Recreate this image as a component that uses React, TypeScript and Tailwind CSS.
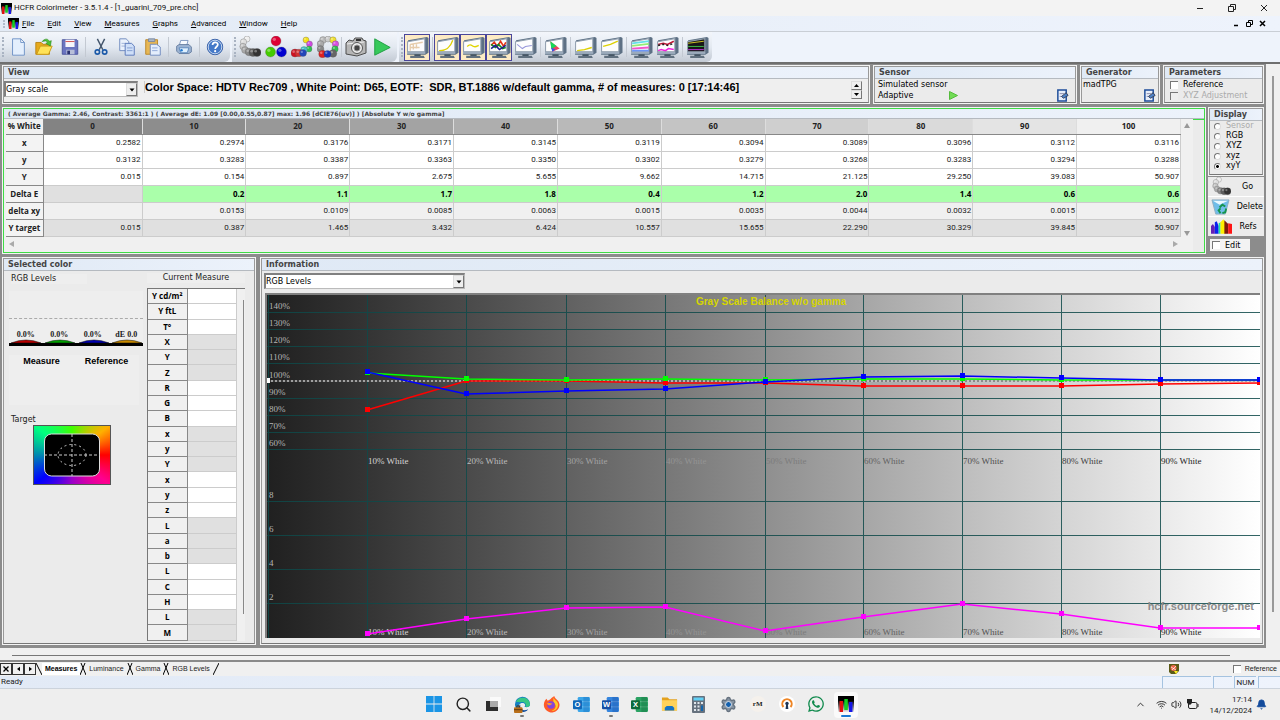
import { useState } from "react";
import type { ReactNode } from "react";
import { Bell, ChevronUp, Search, Settings, Volume2, Wifi } from "lucide-react";
import { FaWhatsapp } from "react-icons/fa";

const columns = [
  { name: "0", bg: "bg-[#838383]" },
  { name: "10", bg: "bg-[#8d8d8d]" },
  { name: "20", bg: "bg-[#989898]" },
  { name: "30", bg: "bg-[#a3a3a3]" },
  { name: "40", bg: "bg-[#aeaeae]" },
  { name: "50", bg: "bg-[#b9b9b9]" },
  { name: "60", bg: "bg-[#c4c4c4]" },
  { name: "70", bg: "bg-[#cfcfcf]" },
  { name: "80", bg: "bg-[#dadada]" },
  { name: "90", bg: "bg-[#e4e4e4]" },
  { name: "100", bg: "bg-[#f0f0f0]" },
];

const rows = [
  { name: "x", bg: "bg-white", values: ["0.2582", "0.2974", "0.3176", "0.3171", "0.3145", "0.3119", "0.3094", "0.3089", "0.3096", "0.3112", "0.3116"] },
  { name: "y", bg: "bg-white", values: ["0.3132", "0.3283", "0.3387", "0.3363", "0.3350", "0.3302", "0.3279", "0.3268", "0.3283", "0.3294", "0.3288"] },
  { name: "Y", bg: "bg-white", values: ["0.015", "0.154", "0.897", "2.675", "5.655", "9.662", "14.715", "21.125", "29.250", "39.083", "50.907"] },
  { name: "Delta E", bg: "bg-[#aaffaa] font-bold text-black", values: ["", "0.2", "1.1", "1.7", "1.8", "0.4", "1.2", "2.0", "1.4", "0.6", "0.6"] },
  { name: "delta xy", bg: "bg-[#f0f0f0]", values: ["", "0.0153", "0.0109", "0.0085", "0.0063", "0.0015", "0.0035", "0.0044", "0.0032", "0.0015", "0.0012"] },
  { name: "Y target", bg: "bg-[#e0e0e0]", values: ["0.015", "0.387", "1.465", "3.432", "6.424", "10.557", "15.655", "22.290", "30.329", "39.845", "50.907"] },
];

const measureRows = ["Y cd/m²", "Y ftL", "T°", "X", "Y", "Z", "R", "G", "B", "x", "y", "Y", "x", "y", "z", "L", "a", "b", "L", "C", "H", "L", "M"];

const menus = ["File", "Edit", "View", "Measures", "Graphs", "Advanced", "Window", "Help"];

const Panel = ({ title, className = "", green = false, children }: { title: string; className?: string; green?: boolean; children: ReactNode }) => (
  <section className={`flex min-w-0 flex-col bg-[#f4f4f4] p-px ${className}`}>
    <div className={`flex min-h-0 flex-1 flex-col border ${green ? "border-[#3fdc46]" : "border-[#999] border-b-[#777]"} bg-[#ebebeb]`}>
      <h2 className={`shrink-0 overflow-hidden border-b border-[#b5bac0] bg-linear-to-r from-[#dfe9f5] to-[#ecf2fb] px-1 font-['DejaVu_Sans',sans-serif] font-bold whitespace-nowrap text-[#444] ${green ? "h-[10px] text-[6px] leading-[9px]" : "h-3 text-[8px] leading-[11px]"}`}>
        {title}
      </h2>
      {children}
    </div>
  </section>
);

const Combo = ({ label, value, className }: { label: string; value: string; className: string }) => (
  <div className={`relative h-4 border-t-2 border-l-2 border-t-[#808080] border-l-[#808080] border-r border-b border-r-[#bbb] border-b-[#bbb] bg-white ${className}`}>
    <select aria-label={label} className="block h-[13px] w-full appearance-none bg-white text-[8px] leading-[13px] text-black outline-none" defaultValue={value}>
      <option>{value}</option>
    </select>
    <span className="pointer-events-none absolute top-0 right-0 flex h-[13px] w-[11px] items-center justify-center border border-[#ddd] border-r-[#777] border-b-[#777] bg-[#eee]">
      <svg width="6" height="4" viewBox="0 0 6 4"><path d="M0.5 0.5h5L3 3.5z" fill="#000" /></svg>
    </span>
  </div>
);

const Tick = ({ label, disabled = false }: { label: string; disabled?: boolean }) => (
  <label className={`flex items-center gap-[5px] text-[8px] leading-[11px] whitespace-nowrap ${disabled ? "text-[#aaa]" : "text-black"}`}>
    <input type="checkbox" disabled={disabled} className={`h-2 w-2 shrink-0 appearance-none border-t border-l border-[#777] checked:bg-black ${disabled ? "bg-[#eee]" : "bg-white"}`} />
    {label}
  </label>
);

/* ---------- icons ---------- */

const Logo = ({ size = 11 }: { size?: number }) => (
  <svg width={size} height={size} viewBox="0 0 16 16">
    <defs>
      <linearGradient id="logoBg" x1="0" y1="0" x2="0" y2="1">
        <stop offset="0.3" stopColor="#000" /><stop offset="1" stopColor="#eee" />
      </linearGradient>
    </defs>
    <path d="M0 0h16v16h-16z" fill="url(#logoBg)" />
    <path d="M1.500 5h3.500v11h-3.500z" fill="#e01010" />
    <path d="M6.300 3h3.500v11h-3.500z" fill="#12d020" />
    <path d="M11 6h3.500v10h-3.500z" fill="#1717e6" />
  </svg>
);

const Svg = ({ children, size = 20 }: { children: ReactNode; size?: number }) => (
  <svg width={size} height={size} viewBox="0 0 22 22" fill="none">{children}</svg>
);

const NewIcon = () => (
  <Svg>
    <path d="M5 2h9l4 4v14H5z" fill="#e4effd" stroke="#6b8fc4" />
    <path d="M14 2v4h4z" fill="#fff" stroke="#6b8fc4" />
  </Svg>
);
const OpenIcon = () => (
  <Svg>
    <path d="M2 6h6l2 2h7v11H2z" fill="#e6a91c" stroke="#b88210" />
    <path d="M3 19l4-9h13l-4 9z" fill="#ffe258" stroke="#c99a18" />
    <path d="M9 5c3-4 7-3 8 0l2-1-1 6-5-3 2-1c-1-2-3-2-6-1z" fill="#4fc236" stroke="#2b8a1b" strokeWidth="0.700" />
  </Svg>
);
const SaveIcon = () => (
  <Svg>
    <path d="M2.500 3h16l1 1v15h-17z" fill="#6a74c0" stroke="#4a539b" />
    <path d="M6 3h10v8H6z" fill="#f6f6fb" />
    <path d="M6 5h10" stroke="#cc4444" />
    <path d="M7 14h9v5H7z" fill="#b8bfd8" />
    <path d="M8 15h3v4H8z" fill="#2a3270" />
  </Svg>
);
const CutIcon = () => (
  <Svg>
    <path d="M7 2l6 12M15 2L9 14" stroke="#44566c" strokeWidth="1.600" />
    <circle cx="7" cy="16.500" r="2.400" stroke="#1b59a8" strokeWidth="1.800" />
    <circle cx="15" cy="16.500" r="2.400" stroke="#1b59a8" strokeWidth="1.800" />
  </Svg>
);
const CopyIcon = () => (
  <Svg>
    <path d="M3 2h7l3 3v10H3z" fill="#eaf1fc" stroke="#6b87bd" />
    <path d="M5 7h5M5 10h5" stroke="#9cb0d6" />
    <path d="M9 7h7l3 3v10H9z" fill="#cfdff8" stroke="#5575b8" />
    <path d="M11 12h6M11 15h6" stroke="#7f9bd0" />
  </Svg>
);
const PasteIcon = () => (
  <Svg>
    <path d="M3 3h13v16H3z" fill="#e7b754" stroke="#b98524" />
    <path d="M6 2h7v3H6z" fill="#aab6c6" stroke="#7886a0" />
    <path d="M8 8h7l4 3v9H8z" fill="#e4eefc" stroke="#6b87bd" />
    <path d="M10 12h6M10 15h6" stroke="#8aa5d6" />
  </Svg>
);
const PrintIcon = () => (
  <Svg size={18}>
    <path d="M7 3h9l-2 7H5z" fill="#f8fbff" stroke="#6e8ab8" />
    <path d="M2 10l3-2h12l3 3v6l-3 2H5l-3-3z" fill="#9cb3d2" stroke="#5c7499" />
    <path d="M5 12h12l-2 6H7z" fill="#dff0ff" stroke="#4f7eb4" />
    <circle cx="8" cy="15" r="1.500" fill="#237ad0" />
  </Svg>
);
const HelpIcon = () => (
  <Svg>
    <circle cx="11" cy="11" r="8.500" fill="#4479c8" stroke="#2b55a0" />
    <circle cx="11" cy="11" r="7.500" stroke="#d5e1f3" />
    <path d="M8.300 8.700c0-3.800 5.800-3.800 5.800-.4 0 2.300-2.900 2.500-2.900 4.800" stroke="#fff" strokeWidth="1.900" />
    <circle cx="11.200" cy="15.600" r="1.200" fill="#fff" />
  </Svg>
);

const Balls = ({ items, size = 22 }: { items: [number, number, number, string][]; size?: number }) => (
  <svg width={size} height={size} viewBox="0 0 22 22">
    {items.map(([x, y, r, color], i) => (
      <g key={i}>
        <circle cx={x} cy={y} r={r} fill={color} stroke="#555" strokeWidth="0.300" />
        <circle cx={x - r / 3} cy={y - r / 3} r={r / 3} fill="#fff" opacity="0.350" />
      </g>
    ))}
  </svg>
);
const grayBalls: [number, number, number, string][] = [[8, 3, 3, "#eee"], [4.5, 6, 3.2, "#ddd"], [4, 10.5, 3.2, "#c4c4c4"], [6, 14, 3.4, "#aaa"], [10, 16, 3.8, "#888"], [14, 16.5, 4, "#5c5c5c"], [18, 16.5, 4, "#333"]];
const primaryBalls: [number, number, number, string][] = [[11, 5, 5, "#dd0033"], [5.5, 16, 5, "#44cc00"], [16.5, 16, 5, "#0000d0"]];
const satBalls: [number, number, number, string][] = [[15, 4, 3, "#f5e11a"], [18.5, 8, 3, "#d04ae0"], [18, 13, 3, "#30c050"], [13, 14, 3.4, "#45c8c8"], [4, 17, 4, "#d01020"], [8, 17, 3.8, "#d43030"], [12, 17, 3.5, "#2244bb"]];
const ringBalls: [number, number, number, string][] = [[6, 4, 3.4, "#bbb"], [11, 3, 3, "#ccc"], [16, 4, 3.2, "#f0e030"], [18.5, 8, 3.2, "#d850e0"], [18, 13, 3.2, "#30c050"], [3.5, 8, 3.4, "#aaa"], [3.5, 13, 3.4, "#888"], [16, 17.5, 3.8, "#666"], [5.5, 18, 3.8, "#dd2020"], [10.5, 18, 3.6, "#1833bb"]];

const CameraIcon = () => (
  <svg width="22" height="22" viewBox="0 0 22 22">
    <path d="M1 7l3-3 4 1 2-3h7l1 2 3 1v12l-9 3-11-2z" fill="#b6b6b6" stroke="#4c4c4c" />
    <path d="M2 8l17-2" stroke="#eee" />
    <circle cx="12" cy="12" r="5.500" fill="#eee" stroke="#555" />
    <circle cx="12" cy="12" r="3" fill="#444" stroke="#999" />
    <path d="M11 3h5v2h-5z" fill="#333" />
  </svg>
);
const PlayIcon = () => (
  <Svg><path d="M3 2l17 9.500L3 20z" fill="#37c95b" stroke="#1d9c40" /></Svg>
);

const Monitor = ({ dark = false, children }: { dark?: boolean; children?: ReactNode }) => (
  <svg width="23" height="23" viewBox="0 0 22 22" fill="none">
    <path d="M2 4L20 1l1.500 1v14l-3 2H1z" fill="#5d7084" />
    <path d="M1.500 5.500L18 2.500v12.500H1.500z" fill={dark ? "#171717" : "#fdfdfd"} stroke="#93a1b0" />
    <path d="M1 15.500h17.500v1.500H1z" fill="#a9b8c8" />
    <path d="M8 17.500h6v2H8z" fill="#3d4d5c" />
    <path d="M4 19h13l1 2H4z" fill="#60707f" />
    {children}
  </svg>
);

const graphButtons: { label: string; on?: boolean; sep?: boolean; dark?: boolean; art: ReactNode }[] = [
  { label: "Measures grid", on: true, sep: true, art: <path d="M4 8l12-2M4 8v6M7 8v5M10 8v4M4 11h9" stroke="#e6ccab" strokeWidth="1.300" /> },
  { label: "Luminance", on: true, art: <path d="M3 14c8 0 11-4 13-10" stroke="#ddd000" strokeWidth="1.300" /> },
  { label: "Gamma", on: true, art: <path d="M5 10c3-3 4-1 6 0s3 0 5-1" stroke="#e0d400" strokeWidth="1.300" /> },
  { label: "RGB levels", on: true, art: <g strokeWidth="1.500"><path d="M3 9l3-3 3 4 3-5 3 5 2-4" stroke="#e33112" /><path d="M3 8l4 3 3-3 4 4 3-1" stroke="#168a20" /><path d="M3 12l4-3 4 4 6-4" stroke="#1c1c8e" /></g> },
  { label: "Color temperature", sep: true, art: <path d="M3 8l5 4 3-2 6-1" stroke="#9797da" /> },
  { label: "CIE diagram", sep: true, art: <g><path d="M6 5l9 7-7 3z" fill="#ef4060" /><path d="M6 5l6 4.500-5 3z" fill="#18d957" /><path d="M6.800 11l1.200 4 3-2z" fill="#3759e0" /></g> },
  { label: "Near black", art: <path d="M3 14l7-1 7-2" stroke="#ddd000" strokeWidth="1.300" /> },
  { label: "Near white", sep: true, art: <path d="M3 10l7-2 7-3" stroke="#ddd000" strokeWidth="1.300" /> },
  { label: "Saturation luminance", art: <g strokeWidth="1.700"><path d="M2 7l16-2" stroke="#65e0e8" /><path d="M2 9.500l16-2" stroke="#93ed75" /><path d="M2 12l16-1" stroke="#f355cb" /><path d="M2 14h16" stroke="#6c96f8" /></g> },
  { label: "Saturation shifts", sep: true, art: <g strokeWidth="1.400"><path d="M2 8l5-1 4 1 6-3" stroke="#c11434" /><path d="M2 9l5-1 4 1 6-2" stroke="#222" strokeDasharray="2 2" /><path d="M2 14l3-1 4 1 3-2 5 1" stroke="#ef22db" /></g> },
  { label: "Combined graph", dark: true, art: <g><path d="M2 7l15-2" stroke="#c6bd22" /><path d="M2 10h15" stroke="#39aa44" /><path d="M2 13h15" stroke="#b52ad0" /></g> },
];

const FormIcon = () => (
  <svg width="13" height="13" viewBox="0 0 14 14">
    <path d="M2 1h9v12H2z" fill="#e7eefa" stroke="#1f4e9a" strokeWidth="1.600" />
    <path d="M4 5h5M4 8h4" stroke="#88a" />
    <path d="M6 8l5-4 2 3-5 3z" fill="#4e82c8" stroke="#343d55" />
  </svg>
);

const ToolGroup = ({ children }: { children: ReactNode }) => (
  <div className="flex h-[30px] items-center rounded-br-md bg-linear-to-b from-[#f3f6fb] via-[#e3e9f1] to-[#c3cad4] px-[2px]">
    <span className="mr-px h-5 border-l-2 border-dotted border-[#a9b3c2]" />
    {children}
  </div>
);
const ToolButton = ({ label, on = false, children }: { label: string; on?: boolean; children: ReactNode }) => (
  <button aria-label={label} className={`flex h-[27px] w-[26px] items-center justify-center ${on ? "border border-[#4a469a] bg-[#fdebc4]" : ""}`}>{children}</button>
);
const Sep = ({ className = "mx-[2px]" }: { className?: string }) => <span className={`h-5 w-px bg-[#c3c9d2] ${className}`} />;

/* ---------- chart ---------- */

const lineX = [100, 199, 299, 398, 498, 596, 695, 794, 893, 992];
const series = [
  { color: "#ff0000", ys: [115, 86, 86, 88, 88, 91, 91, 91, 89, 88] },
  { color: "#00ff00", ys: [78, 84, 85, 84, 85, 84, 84, 85, 85, 85] },
  { color: "#0000ff", ys: [77, 99, 96, 94, 87, 82, 81, 83, 85, 85] },
  { color: "#ff00ff", ys: [339, 324, 313, 312, 336, 322, 309, 319, 333, 333] },
];
const percentLines = [17, 34, 51, 68, 86, 103, 120, 137, 154];
const labelColors = ["#d6d6d6", "#bdbdbd", "#a4a4a4", "#949494", "#7c7c7c", "#626262", "#4f4f4f", "#404040", "#222222"];

const Chart = () => (
  <svg className="block h-auto w-full" viewBox="0 0 993 343" role="img" aria-label="Gray Scale Balance w/o gamma">
    <defs>
      <linearGradient id="gray">
        <stop offset="0" stopColor="#202020" />
        <stop offset="0.100" stopColor="#343434" />
        <stop offset="0.200" stopColor="#4a4a4a" />
        <stop offset="0.400" stopColor="#777777" />
        <stop offset="0.600" stopColor="#a6a6a6" />
        <stop offset="0.800" stopColor="#d4d4d4" />
        <stop offset="1" stopColor="#ffffff" />
      </linearGradient>
    </defs>
    <rect width="993" height="343" fill="url(#gray)" />
    <g stroke="#0f4a4a" strokeWidth="1" opacity="0.850" shapeRendering="crispEdges">
      {[...percentLines, 206, 240, 274, 308].map((y) => y !== 86 && <path key={y} d={`M0 ${y + 0.5}H993`} />)}
      {[1, ...lineX.slice(0, 9)].map((x) => <path key={x} d={`M${x + 0.5} 0V343`} />)}
    </g>
    <path d="M0 86H993" stroke="#555" />
    <path d="M0 86H993" stroke="#fff" strokeDasharray="2 2" />
    <g fontFamily="Liberation Serif, serif" fontSize="9" fill="#b5b5b5">
      {percentLines.map((y, i) => <text key={y} x="2" y={y - 3}>{140 - i * 10}%</text>)}
      {[8, 6, 4, 2].map((n, i) => <text key={n} x="2" y={203 + i * 34}>{n}</text>)}
      {lineX.slice(0, 9).map((x, i) => (
        <g key={x} fill={labelColors[i]}>
          <text x={x + 1} y="169">{(i + 1) * 10}% White</text>
          <text x={x + 1} y="340">{(i + 1) * 10}% White</text>
        </g>
      ))}
    </g>
    <g fontFamily="Liberation Sans, sans-serif" fontWeight="bold">
      <text x="504" y="10" fontSize="10" textAnchor="middle" fill="#d6d600">Gray Scale Balance w/o gamma</text>
      <text x="987" y="315" fontSize="11" textAnchor="end" fill="#8c8c8c">hcfr.sourceforge.net</text>
    </g>
    <path d="M0 83h3v5h-3z" fill="#fff" />
    {series.map((s) => (
      <g key={s.color}>
        <polyline points={s.ys.map((y, i) => `${lineX[i]},${y}`).join(" ")} fill="none" stroke={s.color} strokeWidth="1.500" />
        {s.ys.map((y, i) => <rect key={i} x={lineX[i] - 2} y={y - 3} width="5" height="5" fill={s.color} />)}
      </g>
    ))}
  </svg>
);

const Target = () => (
  <div className="flex h-[60px] w-[78px] items-center justify-center border border-[#555] bg-[conic-gradient(#40ff00_0deg,#ffb000_52deg,#ff0000_90deg,#ff0090_128deg,#9a00c8_180deg,#0000ff_232deg,#0088b0_270deg,#00ff80_308deg,#40ff00_360deg)]">
    <svg width="56" height="44" viewBox="0 0 56 44" fill="none">
      <rect x="0.500" y="1" width="55" height="42" rx="7" fill="#000" stroke="#ddd" />
      <path d="M0 22H56M28 1V43" stroke="#ccc" strokeDasharray="3 2" />
      <ellipse cx="28" cy="22" rx="14" ry="10.500" stroke="#ccc" strokeDasharray="2 3" />
    </svg>
  </div>
);

/* ---------- taskbar ---------- */

const Letter = ({ color, back, letter }: { color: string; back: string; letter: string }) => (
  <svg width="17" height="17" viewBox="0 0 18 18">
    <rect x="5" y="1" width="13" height="16" rx="1.500" fill={back} />
    <path d="M5 6h13M5 11.500h13" stroke="#fff" strokeOpacity="0.300" />
    <path d="M11 1v16h6V1z" fill={color} opacity="0.350" />
    <rect x="0" y="4.500" width="9.500" height="9.500" rx="1" fill={color} />
    <text x="4.700" y="12" fontSize="8" fontWeight="bold" textAnchor="middle" fill="#fff" fontFamily="Liberation Sans, sans-serif">{letter}</text>
  </svg>
);

const apps: { label: string; open?: boolean; active?: boolean; icon: ReactNode }[] = [
  { label: "Start", icon: <svg width="16" height="16" viewBox="0 0 16 16" fill="#1a95e6"><path d="M0 0h7.600v7.600H0zM8.400 0H16v7.600H8.400zM0 8.400h7.600V16H0zM8.400 8.400H16V16H8.400z" /></svg> },
  { label: "Search", icon: <Search size={17} strokeWidth={2} color="#222" /> },
  { label: "Task view", icon: <svg width="16" height="16" viewBox="0 0 16 16"><path d="M5 1h11v10H5z" fill="#fafafa" /><path d="M1 5h4v6h8v4H1z" fill="#2d2d2d" /><path d="M5 5h8v6H5z" fill="#aaa" /></svg> },
  {
    label: "Edge", open: true, icon: (
      <svg width="17" height="17" viewBox="0 0 18 18">
        <path d="M1 9a8 8 0 0 1 16-.5c0 3-3 4-6 3 2-2 0-5-3-4S4 12 7 16C3 15 1 12 1 9z" fill="#147fc2" />
        <path d="M2 6a8 8 0 0 1 15 3c0 2-2 3-5 2.500 2-3-1-6-5-5z" fill="#38c784" />
        <path d="M7 9c-2 4 2 8 8 5-3 5-11 3-11-2z" fill="#0c4b9d" />
        <rect x="0" y="12" width="9" height="6" rx="1" fill="#b96f19" /><path d="M3 12v-1.500h3V12M0 14.500h9" stroke="#5b3510" fill="none" />
      </svg>
    ),
  },
  {
    label: "Firefox", icon: (
      <svg width="17" height="17" viewBox="0 0 18 18">
        <path d="M9 2l3-2c0 3 5 4 5.500 9A8.300 8.300 0 1 1 2 5l1.500-2L5 5c1-1 3-1 4-3z" fill="#ff5b28" />
        <path d="M11 1c0 3 5 4 5 8s-3 7-7 7c5-2 6-6 2-9z" fill="#ffcc29" />
        <circle cx="8.500" cy="9.500" r="4" fill="#8446dd" /><path d="M4 8c2-2 4 0 6 0-2 2-4 3-6 0z" fill="#ff9b2e" />
      </svg>
    ),
  },
  { label: "Outlook", icon: <Letter color="#1067b8" back="#3ba5e8" letter="O" /> },
  { label: "Word", open: true, icon: <Letter color="#164fa5" back="#3585dd" letter="W" /> },
  { label: "Excel", icon: <Letter color="#0d6b3a" back="#2ba263" letter="X" /> },
  { label: "File Explorer", icon: <svg width="17" height="16" viewBox="0 0 18 16"><path d="M1 1h6l2 2h8v12H1z" fill="#e4a21f" /><path d="M1 4h16v11H1z" fill="#ffd25a" /><path d="M4 15v-3l2-2h6l2 2v3z" fill="#1673c4" /></svg> },
  { label: "Calculator", icon: <svg width="13" height="17" viewBox="0 0 13 17"><rect width="13" height="17" rx="1" fill="#66717e" /><path d="M1.500 1.500h10v3h-10z" fill="#62d0f5" /><path d="M2 6h2v2H2zM5.500 6h2v2h-2zM9 6h2v2H9zM2 9.500h2v2H2zM5.500 9.500h2v2h-2zM2 13h2v2H2zM5.500 13h2v2h-2z" fill="#dfe5eb" /><path d="M9 9.500h2v5.500H9z" fill="#1265ad" /></svg> },
  { label: "Settings", icon: <svg width="17" height="17" viewBox="0 0 17 17"><Settings size={17} color="#66727f" fill="#8795a4" strokeWidth={2} /><circle cx="8.500" cy="8.500" r="3" fill="#1260ae" stroke="#dde3ea" /></svg> },
  { label: "reMarkable", icon: <span className="flex h-4 w-4 items-center justify-center rounded-full bg-[#f5f1ec] font-['Liberation_Serif',serif] text-[7px] font-bold">rM</span> },
  { label: "OpenVPN", icon: <svg width="16" height="16" viewBox="0 0 16 16"><circle cx="8" cy="8" r="8" fill="#fff" /><path d="M4.500 11a4.700 4.700 0 1 1 7 0" fill="none" stroke="#ee8525" strokeWidth="2" /><circle cx="8" cy="7.500" r="1.700" fill="#1d3556" /><path d="M7.200 8h1.600l.6 5H6.600z" fill="#1d3556" /></svg> },
  { label: "WhatsApp", icon: <FaWhatsapp size={18} color="#108a4d" /> },
  { label: "HCFR Colorimeter", active: true, icon: <Logo size={16} /> },
];

const sheetTabs = ["Measures", "Luminance", "Gamma", "RGB Levels"];

export default function App() {
  const [display, setDisplay] = useState("xyY");
  const [tab, setTab] = useState("Measures");

  return (
    <div className="flex min-h-screen w-full flex-col bg-[#f0f0f0] font-['DejaVu_Sans',sans-serif] text-[8px] text-[#222]">
      <header className="font-['Roboto',sans-serif]">
        <div className="flex h-4 items-center bg-[#f3f3f3] pl-px">
          <Logo />
          <h1 className="ml-[2px] flex-1 text-[8px] leading-4 text-[#111]">HCFR Colorimeter - 3.5.1.4 - [1_guarini_709_pre.chc]</h1>
          <div className="flex items-center gap-6 pr-3">
            <button aria-label="Minimize"><svg width="8" height="8" viewBox="0 0 8 8"><path d="M1 4.500h6" stroke="#222" /></svg></button>
            <button aria-label="Restore"><svg width="8" height="8" viewBox="0 0 8 8" fill="none" stroke="#222"><path d="M0.500 2.500h5v5h-5zM2.500 2V.5h5v5H6" /></svg></button>
            <button aria-label="Close"><svg width="8" height="8" viewBox="0 0 8 8"><path d="M1 1l6 6M7 1L1 7" stroke="#222" /></svg></button>
          </div>
        </div>
        <nav className="flex h-[15px] items-center bg-linear-to-r from-[#e3ebf6] to-[#eef3fc] pr-1 pl-[3px]">
          <span className="mr-[3px] h-2 border-l-2 border-dotted border-[#b2bccb]" />
          <Logo />
          <div className="ml-[3px] flex flex-1 gap-[13px]">
            {menus.map((m) => (
              <button key={m} className="text-[8px] leading-[14px] text-black">
                <span className="underline">{m[0]}</span>{m.slice(1)}
              </button>
            ))}
          </div>
          <div className="flex items-center gap-[6px] pr-[10px]">
            <button aria-label="Minimize document"><svg width="6" height="7" viewBox="0 0 6 7"><path d="M0 5.500h4" stroke="#000" strokeWidth="1.500" /></svg></button>
            <button aria-label="Restore document"><svg width="7" height="7" viewBox="0 0 7 7" fill="none" stroke="#000"><path d="M.5 2.500h4v4h-4zM2.500 2V.5h4v4H5" /></svg></button>
            <button aria-label="Close document"><svg width="7" height="7" viewBox="0 0 7 7"><path d="M1 1l5 5M6 1L1 6" stroke="#000" strokeWidth="1.500" /></svg></button>
          </div>
        </nav>
        <div className="flex gap-[2px] border-t border-[#c9ced5] bg-[#eef3fb]">
          <ToolGroup>
            <ToolButton label="New"><NewIcon /></ToolButton>
            <ToolButton label="Open"><OpenIcon /></ToolButton>
            <ToolButton label="Save"><SaveIcon /></ToolButton>
            <Sep />
            <ToolButton label="Cut"><CutIcon /></ToolButton>
            <ToolButton label="Copy"><CopyIcon /></ToolButton>
            <ToolButton label="Paste"><PasteIcon /></ToolButton>
            <Sep />
            <ToolButton label="Print"><PrintIcon /></ToolButton>
            <Sep />
            <ToolButton label="Help"><HelpIcon /></ToolButton>
          </ToolGroup>
          <ToolGroup>
            <ToolButton label="Measure gray scale"><Balls items={grayBalls} /></ToolButton>
            <ToolButton label="Measure primaries"><Balls items={primaryBalls} /></ToolButton>
            <ToolButton label="Measure saturations"><Balls items={satBalls} /></ToolButton>
            <ToolButton label="Measure all"><Balls items={ringBalls} /></ToolButton>
            <Sep className="mr-px" />
            <ToolButton label="Capture"><CameraIcon /></ToolButton>
            <ToolButton label="Continuous measures"><PlayIcon /></ToolButton>
          </ToolGroup>
          <ToolGroup>
            {graphButtons.map((b) => (
              <div key={b.label} className="flex items-center">
                <ToolButton label={b.label} on={b.on}><Monitor dark={b.dark}>{b.art}</Monitor></ToolButton>
                {b.sep && <Sep className="mr-px ml-[2px]" />}
              </div>
            ))}
          </ToolGroup>
        </div>
      </header>

      <div className="flex border-t-2 border-[#6f6f6f]">
        <main className="flex min-w-0 flex-1 flex-col gap-[3px] border-r-2 border-[#8c8c8c] bg-[#8c8c8c] pt-px pb-[3px] pl-[2px]">
          <div className="flex h-[39px] gap-[3px]">
            <Panel title="View" className="flex-1">
              <div className="flex flex-1 items-start bg-[#efefef] pt-[2px]">
                <Combo label="View" value="Gray scale" className="w-[134px]" />
                <p className="ml-[6px] flex-1 border-l border-[#ccc] font-['Liberation_Sans',sans-serif] text-[11px] leading-3 font-bold whitespace-pre text-black">
                  Color Space: HDTV Rec709 , White Point: D65, EOTF:  SDR, BT.1886 w/default gamma, # of measures: 0 [17:14:46]
                </p>
                <div className="mr-[6px] flex flex-col">
                  <button aria-label="Up" className="flex h-[9px] w-[11px] items-center justify-center border border-[#ddd] border-r-[#777] border-b-[#777]"><svg width="5" height="3" viewBox="0 0 5 3"><path d="M0 3L2.500 0 5 3z" /></svg></button>
                  <button aria-label="Down" className="flex h-[9px] w-[11px] items-center justify-center border border-[#ddd] border-r-[#777] border-b-[#777]"><svg width="5" height="3" viewBox="0 0 5 3"><path d="M0 0h5L2.500 3z" /></svg></button>
                </div>
              </div>
            </Panel>
            <Panel title="Sensor" className="w-[204px]">
              <div className="flex flex-1 justify-between pr-[6px] pl-[3px] text-black">
                <div className="leading-[11px]">
                  <p>Simulated sensor</p>
                  <div className="flex gap-9">
                    <span>Adaptive</span>
                    <button aria-label="Start sensor"><svg width="9" height="9" viewBox="0 0 9 9"><path d="M0.500 0.500l8 4-8 4z" fill="#72dc55" stroke="#55bb3c" /></svg></button>
                  </div>
                </div>
                <button aria-label="Configure sensor" className="self-end"><FormIcon /></button>
              </div>
            </Panel>
            <Panel title="Generator" className="w-[80px]">
              <div className="flex flex-1 justify-between pr-[2px] pl-px text-black">
                <p className="leading-[11px]">madTPG</p>
                <button aria-label="Configure generator" className="self-end"><FormIcon /></button>
              </div>
            </Panel>
            <Panel title="Parameters" className="w-[101px]">
              <div className="pl-[5px]">
                <Tick label="Reference" />
                <Tick label="XYZ Adjustment" disabled />
              </div>
            </Panel>
          </div>

          <div className="flex h-[147px] gap-[2px]">
            <Panel title="( Average Gamma: 2.46, Contrast: 3361:1 ) ( Average dE: 1.09 [0.00,0.55,0.87] max: 1.96 [dCIE76(uv)] ) [Absolute Y w/o gamma]" green className="flex-1">
              <div className="flex flex-1 bg-[#f0f0f0] pl-[2px]">
                <div className="flex min-w-0 flex-1 flex-col">
                  <table className="w-full table-fixed border-collapse font-['Open_Sans',sans-serif] text-[8px]">
                    <colgroup>
                      <col className="w-[37px]" />
                      <col className="w-[99px]" />
                      {columns.slice(1).map((c) => <col key={c.name} />)}
                    </colgroup>
                    <thead>
                      <tr className="h-[15px]">
                        <th className="border-r border-b border-[#888] p-0 leading-3 whitespace-nowrap">% White</th>
                        {columns.map((c) => (
                          <th key={c.name} className={`border-r border-b border-r-[#ddd] border-b-[#888] p-0 leading-3 ${c.bg}`}>{c.name}</th>
                        ))}
                      </tr>
                    </thead>
                    <tbody>
                      {rows.map((r) => (
                        <tr key={r.name} className="h-[17px]">
                          <th className="border-r border-b border-[#888] bg-[#f3f3f3] p-0 leading-3 whitespace-nowrap">{r.name}</th>
                          {r.values.map((v, i) => (
                            <td key={i} className={`border-r border-b border-[#ccc] p-0 pr-px text-right leading-3 ${r.name === "Delta E" ? "" : "font-['Roboto',sans-serif]"} ${r.name === "Delta E" && i === 0 ? "bg-[#e0e0e0]" : r.bg}`}>{v}</td>
                          ))}
                        </tr>
                      ))}
                    </tbody>
                  </table>
                  <div className="flex flex-1 items-center justify-between px-[3px]">
                    <svg width="5" height="6" viewBox="0 0 5 6"><path d="M5 0v6L0 3z" fill="#aaa" /></svg>
                    <svg width="5" height="6" viewBox="0 0 5 6"><path d="M0 0l5 3-5 3z" fill="#aaa" /></svg>
                  </div>
                </div>
                <div className="flex w-[12px] flex-col items-center justify-between pt-1 pb-4">
                  <svg width="6" height="5" viewBox="0 0 6 5"><path d="M0 5l3-5 3 5z" fill="#999" /></svg>
                  <svg width="6" height="5" viewBox="0 0 6 5"><path d="M0 0h6L3 5z" fill="#999" /></svg>
                </div>
                <div className="w-[11px] border-t border-[#3fdc46] bg-[#ebebeb]" />
              </div>
            </Panel>
            <div className="flex w-[56px] flex-col">
              <Panel title="Display" className="h-[69px]">
                <fieldset className="flex flex-1 flex-col justify-between pl-1">
                  {["Sensor", "RGB", "XYZ", "xyz", "xyY"].map((d) => (
                    <label key={d} className={`flex items-center gap-[5px] leading-[10px] ${d === "Sensor" ? "text-[#aaa]" : "text-black"}`}>
                      <input type="radio" name="display" disabled={d === "Sensor"} checked={display === d} onChange={() => setDisplay(d)} className="h-[7px] w-[7px] shrink-0 appearance-none rounded-full border border-[#ddd] border-t-[#777] border-l-[#777] bg-white checked:bg-[radial-gradient(#000_35%,#fff_45%)]" />
                      {d}
                    </label>
                  ))}
                </fieldset>
              </Panel>
              <div className="mt-px flex flex-col gap-px bg-white text-black">
                <button className="flex h-[19px] items-center bg-[#ebebeb] pl-1">
                  <Balls items={grayBalls} size={19} /><span className="flex-1 text-center">Go</span>
                </button>
                <button className="flex h-[19px] items-center bg-[#ebebeb] pr-px pl-[3px]">
                  <svg width="19" height="18" viewBox="0 0 20 19"><path d="M1 2h18l-4 15H5z" fill="#6fbde9" stroke="#8daec3" /><path d="M2 3h16l-9 4z" fill="#e9f7ff" /><path d="M9 10l3-3 3 2M16 11l-1 4-3 1M10 16l-2-3 2-2" stroke="#14944c" strokeWidth="2" fill="none" /></svg>
                  <span className="flex-1 text-right">Delete</span>
                </button>
                <button className="flex h-[19px] items-center bg-[#ebebeb] pl-[3px]">
                  <svg width="21" height="15" viewBox="0 0 22 15">
                    <path d="M0 15V7l2-2 2 3v7z" fill="#6420b4" /><path d="M4 15V3l2-1 2 5v8z" fill="#0b22ee" /><path d="M8 15V4l2-1v12z" fill="#1ee0a0" /><path d="M10 15V3l3-3 2 3v12z" fill="#ffee00" /><path d="M14 15V1l4 4v10z" fill="#7b1a0c" /><path d="M18 15V4l4 1v10z" fill="#ff1414" />
                  </svg>
                  <span className="flex-1 text-center">Refs</span>
                </button>
              </div>
              <div className="mt-[3px] ml-[2px] flex h-3 w-10 items-center bg-[#f3f3f3] pl-[2px]">
                <Tick label="Edit" />
              </div>
            </div>
          </div>

          <div className="flex gap-1">
            <Panel title="Selected color" className="w-[254px] shrink-0">
              <div className="flex flex-1 justify-between pr-[9px] pl-[5px]">
                <div className="flex w-[134px] flex-col">
                  <h3 className="mt-[3px] ml-[2px] w-[76px] bg-[#eee] leading-[10px]">RGB Levels</h3>
                  <div className="mt-[7px] flex h-[55px] flex-col justify-end bg-[#eee]">
                    <div className="mb-[12px] border-t border-dashed border-[#aaa]" />
                    <div className="grid grid-cols-4 text-center font-['Liberation_Serif',serif] text-[8px] leading-2 font-bold">
                      <span>0.0%</span><span>0.0%</span><span>0.0%</span><span>dE 0.0</span>
                    </div>
                    <svg className="block h-[7px] w-full" viewBox="0 0 134 7">
                      <path d="M2 4q15-6 30 0z" fill="#b80000" stroke="#000" strokeWidth="0.500" /><path d="M36 4q15-6 30 0z" fill="#00a000" stroke="#000" strokeWidth="0.500" /><path d="M70 4q15-6 30 0z" fill="#0000b0" stroke="#000" strokeWidth="0.500" /><path d="M103 4q15-6 30 0z" fill="#c88a00" stroke="#000" strokeWidth="0.500" />
                      <path d="M0 4h134v3H0z" fill="#000" />
                    </svg>
                  </div>
                  <div className="mt-[9px] grid h-[50px] w-[130px] grid-cols-2 bg-[#eee] text-center font-['Liberation_Sans',sans-serif] text-[9px] leading-3 font-bold text-black">
                    <span>Measure</span><span>Reference</span>
                  </div>
                  <h3 className="mt-[10px] ml-[2px] leading-[10px]">Target</h3>
                  <div className="ml-6"><Target /></div>
                </div>
                <div className="w-[98px]">
                  <h3 className="mt-[2px] mb-[5px] bg-[#eee] text-center leading-[10px]">Current Measure</h3>
                  <div className="flex border-t border-l border-[#777] bg-[#f0f0f0]">
                    <table className="h-[352px] w-[89px] table-fixed border-collapse font-['Open_Sans',sans-serif] text-[8px]">
                      <tbody>
                        {measureRows.map((m, i) => (
                          <tr key={i}>
                            <th className="w-[39px] border-r border-b border-[#888] bg-[#f0f0f0] p-0 leading-3 text-black">{m}</th>
                            <td className={`border-r border-b border-[#ccc] p-0 ${Math.floor(i / 3) % 2 ? "bg-[#e0e0e0]" : "bg-white"}`} />
                          </tr>
                        ))}
                      </tbody>
                    </table>
                    <div className="mt-[11px] mb-[27px] ml-[6px] w-px bg-[#888]" />
                  </div>
                </div>
              </div>
            </Panel>
            <Panel title="Information" className="flex-1">
              <div className="pt-[2px] pl-[2px]">
                <Combo label="Information" value="RGB Levels" className="w-[201px]" />
              </div>
              <div className="mt-1 mr-[2px] mb-[5px] ml-[3px] border-t-2 border-l-2 border-[#808080] bg-white">
                <Chart />
              </div>
            </Panel>
          </div>
        </main>
        <div className="flex w-[14px] justify-center pt-3 pb-9">
          <div className="w-[2px] bg-[#999]" />
        </div>
      </div>

      <div className="h-[14px] border-b-2 border-[#8a8a8a] pt-[7px] pr-[50px] pl-3">
        <div className="h-px bg-[#777]" />
      </div>
      <div className="flex h-[14px] items-center bg-[#f0f0f0] font-['Liberation_Sans',sans-serif] text-[7px]">
        <button aria-label="Close sheet" className="flex h-3 w-3 items-center justify-center border border-[#333]"><svg width="6" height="6" viewBox="0 0 6 6"><path d="M.5.500l5 5M5.500.500l-5 5" stroke="#000" strokeWidth="1.300" /></svg></button>
        <button aria-label="Previous sheet" className="flex h-3 w-3 items-center justify-center border border-[#333]"><svg width="3" height="6" viewBox="0 0 4 6"><path d="M4 0v6L0 3z" /></svg></button>
        <button aria-label="Next sheet" className="flex h-3 w-3 items-center justify-center border border-[#333]"><svg width="3" height="6" viewBox="0 0 4 6"><path d="M0 0v6l4-3z" /></svg></button>
        <svg width="6" height="12" viewBox="0 0 6 12"><path d="M0 0l6 12" stroke="#000" /></svg>
        {sheetTabs.map((t) => (
          <div key={t} className="flex items-center">
            <button onClick={() => setTab(t)} className={`h-3 px-[3px] ${tab === t ? "bg-white font-bold text-black" : ""}`}>{t}</button>
            <svg width="6" height="12" viewBox="0 0 6 12"><path d={t === "RGB Levels" ? "M6 0L0 12" : "M5 0L0 12M1 0l5 12"} stroke="#000" fill="none" /></svg>
          </div>
        ))}
        <span className="flex-1" />
        <svg className="mr-[54px]" width="10" height="10" viewBox="0 0 10 10"><path d="M0 0h10v7l-3 3H2L0 8z" fill="#5b5a16" /><circle cx="4.500" cy="4" r="3" fill="#ef6a4c" /><path d="M2 3l5 3M3 6l4-4" stroke="#fff" strokeWidth="0.700" /><path d="M5 7h4L7 10z" fill="#ffee22" /></svg>
        <label className="flex items-center gap-[4px] pr-[3px]">
          <input type="checkbox" className="h-2 w-2 appearance-none border-t border-l border-[#777] bg-white checked:bg-black" />
          Reference
        </label>
      </div>
      <div className="flex h-[13px] items-center border-b border-[#ccd3dc] bg-linear-to-r from-[#e2eaf6] to-[#eef3fc] pl-px font-['Roboto',sans-serif] text-[8px]">
        <span className="flex-1">Ready</span>
        <div className="flex h-3 gap-[2px]">
          <span className="w-[49px] border-t border-l border-[#a5c3e0]" />
          <span className="w-[19px] border-t border-l border-[#a5c3e0]" />
          <span className="w-[22px] border-t border-l border-[#a5c3e0] text-center leading-[11px]">NUM</span>
          <span className="w-[22px] border-t border-l border-[#a5c3e0]" />
        </div>
      </div>

      <footer className="grid flex-1 grid-cols-[1fr_auto_1fr] items-center bg-[#eeeeee] font-['Roboto',sans-serif]">
        <div />
        <div className="flex w-[436px] justify-between">
          {apps.map((a) => (
            <button key={a.label} aria-label={a.label} className={`flex h-[26px] w-6 flex-col items-center rounded-sm pt-1 ${a.active ? "bg-[#fafafa]" : ""}`}>
              <span className="flex h-[17px] items-center">{a.icon}</span>
              {a.open && <span className="mt-[2px] h-[2px] w-1 rounded-full bg-[#777]" />}
              {a.active && <span className="mt-[2px] h-[2px] w-[10px] rounded-full bg-[#1779d4]" />}
            </button>
          ))}
        </div>
        <div className="flex items-center justify-end pr-[13px]">
          <ChevronUp size={11} className="mr-[10px]" />
          <Wifi size={11} className="mr-1" />
          <Volume2 size={11} className="mr-[5px]" />
          <svg className="mr-[10px]" width="12" height="11" viewBox="0 0 12 11"><rect x="1.500" y="3.500" width="8.500" height="6" rx="1.500" fill="none" stroke="#222" /><path d="M11 5v3" stroke="#222" /><path d="M0 0h5v4l-2 2-3-2z" fill="#222" /></svg>
          <div className="mr-1 text-right text-[8px] leading-[11px] text-[#222]">
            <p>17:14</p>
            <p>14/12/2024</p>
          </div>
          <Bell size={11} color="#114a9c" fill="#114a9c" />
        </div>
      </footer>
    </div>
  );
}
